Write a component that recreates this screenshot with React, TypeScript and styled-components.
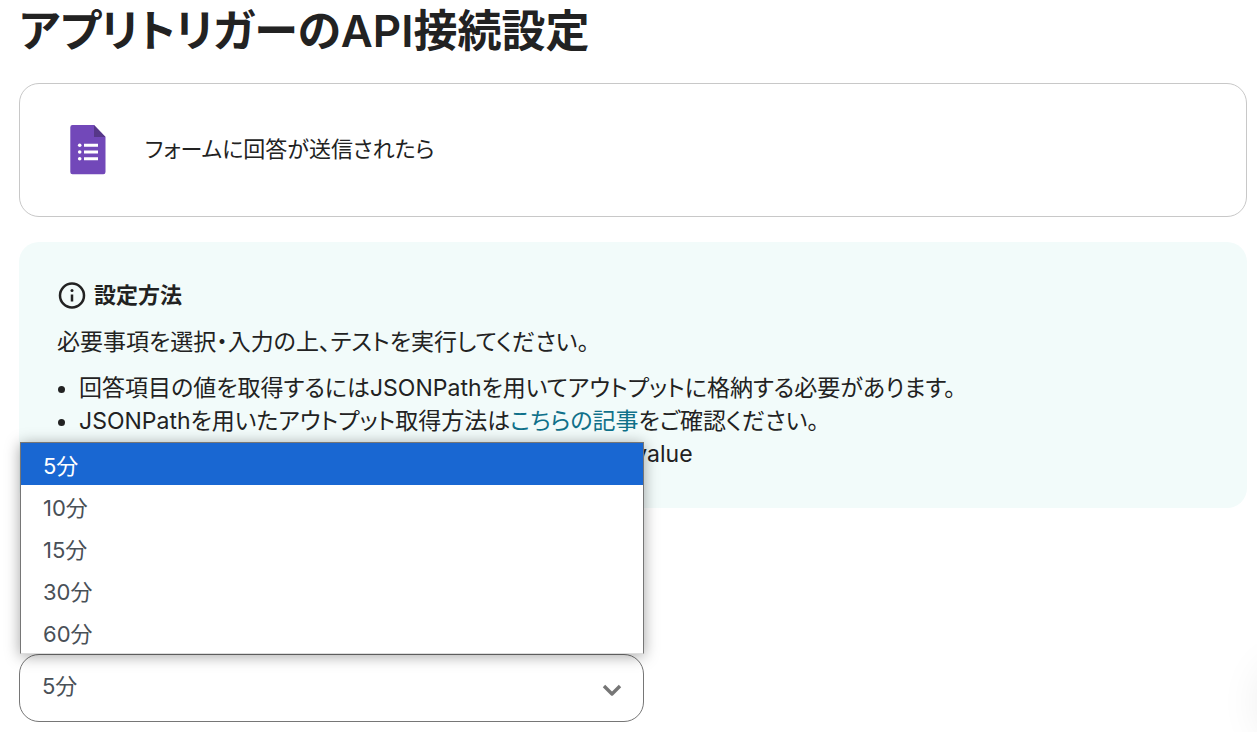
import React from "react";
import styled, { createGlobalStyle } from "styled-components";

const GlobalStyle = createGlobalStyle`
  * { box-sizing: border-box; }
  body {
    margin: 0;
    background: #fff;
    color: #222;
    font-family: Inter, "Noto Sans CJK JP", sans-serif;
    font-size: 22px;
    line-height: 32px;
    font-feature-settings: "palt";
    overflow-x: hidden;
  }
`;

const Page = styled.main`
  display: flex;
  flex-direction: column;
  padding: 0 10px 10px 19px;
`;

const Title = styled.h1`
  margin: 0;
  padding-bottom: 21px;
  font-size: 44px;
  line-height: 62px;
  font-weight: 600;
`;

const TriggerCard = styled.section`
  display: flex;
  align-items: center;
  gap: 37px;
  padding: 41px 50px;
  border: 1px solid #c8c8c8;
  border-radius: 20px;
`;

const FormIcon = styled.svg`
  width: 38px;
  height: 50px;
`;

const TriggerName = styled.span`
  padding-bottom: 2px;
`;

const InfoPanel = styled.section`
  margin-top: 25px;
  padding: 37px 38px;
  border-radius: 20px;
  background: #f2fbfa;
`;

const InfoHeading = styled.h2`
  display: flex;
  align-items: center;
  gap: 7px;
  margin: 0 0 15px;
  font-size: 22px;
  line-height: 32px;
  font-weight: 600;

  svg {
    width: 30px;
    height: 30px;
  }
`;

const Paragraph = styled.p`
  margin: 0 0 14px;
  font-size: 23px;
`;

const Notes = styled.ul`
  margin: 0;
  padding-left: 22px;
  font-size: 23px;
  line-height: 33px;
`;

const Link = styled.a`
  color: #10718a;
  text-decoration: none;
`;

const Field = styled.div`
  width: 51%;
  max-width: 625px;
  margin-top: 146px;
`;

const SelectBox = styled.div`
  position: relative;
  display: grid;
  align-items: center;
`;

const Select = styled.select`
  grid-area: 1 / 1;
  appearance: none;
  height: 68px;
  padding: 0 60px 4px 22px;
  border: 1px solid #767676;
  border-radius: 20px;
  background: #fff;
  color: #495057;
  font: inherit;
  font-feature-settings: inherit;
`;

const Chevron = styled.svg`
  grid-area: 1 / 1;
  justify-self: end;
  width: 20px;
  height: 12px;
  margin: 3px 22px 0 0;
  pointer-events: none;
`;

const Options = styled.ul`
  position: absolute;
  left: 1px;
  right: 0;
  bottom: 100%;
  margin: 0;
  padding: 0;
  list-style: none;
  border: 1px solid #767676;
  border-bottom-color: #ddd;
  background: #fff;
  box-shadow: 0 2px 14px rgba(0, 0, 0, 0.36);
`;

const Option = styled.li<{ $active?: boolean }>`
  padding: 7px 22px 3px;
  color: ${(p) => (p.$active ? "#fff" : "#495057")};
  background: ${(p) => (p.$active ? "#1967d2" : "#fff")};
`;

const ChatLauncher = styled.button`
  position: fixed;
  right: -76px;
  bottom: -2px;
  width: 68px;
  height: 68px;
  border: 0;
  border-radius: 50%;
  background: #fff;
  box-shadow: 0 2px 48px rgba(0, 0, 0, 0.12);
`;

const intervals = ["5分", "10分", "15分", "30分", "60分"];

export default function App() {
  return (
    <>
      <GlobalStyle />
      <Page>
        <Title>アプリトリガーのAPI接続設定</Title>

        <TriggerCard>
          <FormIcon viewBox="0 0 38 50" aria-hidden="true">
            <path d="M2 0h19.500l14.500 0v0z" fill="none" />
            <path d="M2.500 0H24l11.500 12v35a2.200 2.200 0 0 1-2.200 2.200H2.500A2.200 2.200 0 0 1 .3 47V2.200A2.200 2.200 0 0 1 2.500 0z" fill="#7248b9" />
            <path d="M24 0l11.500 12H24z" fill="#563788" />
            <g fill="#fff">
              <circle cx="9.700" cy="20.300" r="1.800" />
              <circle cx="9.700" cy="27" r="1.800" />
              <circle cx="9.700" cy="33.700" r="1.800" />
              <path d="M14 18.800h14v3H14zM14 25.500h14v3H14zM14 32.200h14v3H14z" />
            </g>
          </FormIcon>
          <TriggerName>フォームに回答が送信されたら</TriggerName>
        </TriggerCard>

        <InfoPanel>
          <InfoHeading>
            <svg viewBox="0 0 30 30" fill="none" stroke="#222" strokeWidth="2.5" aria-hidden="true">
              <circle cx="15" cy="15.500" r="12" />
              <path d="M15 14.500v7" />
              <circle cx="15" cy="10.500" r="1.500" fill="#222" stroke="none" />
            </svg>
            設定方法
          </InfoHeading>
          <Paragraph>必要事項を選択・入力の上、テストを実行してください。</Paragraph>
          <Notes>
            <li>回答項目の値を取得するにはJSONPathを用いてアウトプットに格納する必要があります。</li>
            <li>
              JSONPathを用いたアウトプット取得方法は<Link href="#article">こちらの記事</Link>をご確認ください。
            </li>
            <li>JSONPathの例：$.answers.ID.textAnswers.answers.value</li>
          </Notes>
        </InfoPanel>

        <Field>
          <SelectBox>
            <Select aria-label="トリガーの起動間隔" defaultValue="5分">
              {intervals.map((v) => (
                <option key={v}>{v}</option>
              ))}
            </Select>
            <Chevron viewBox="0 0 20 12" fill="none" stroke="#767676" strokeWidth="3.4" strokeLinejoin="round" aria-hidden="true">
              <path d="M2 2l8 8 8-8" />
            </Chevron>
            <Options role="listbox" aria-label="トリガーの起動間隔">
              {intervals.map((v, i) => (
                <Option key={v} role="option" aria-selected={i === 0} $active={i === 0}>
                  {v}
                </Option>
              ))}
            </Options>
          </SelectBox>
        </Field>
      </Page>
      <ChatLauncher aria-label="チャット" />
    </>
  );
}
